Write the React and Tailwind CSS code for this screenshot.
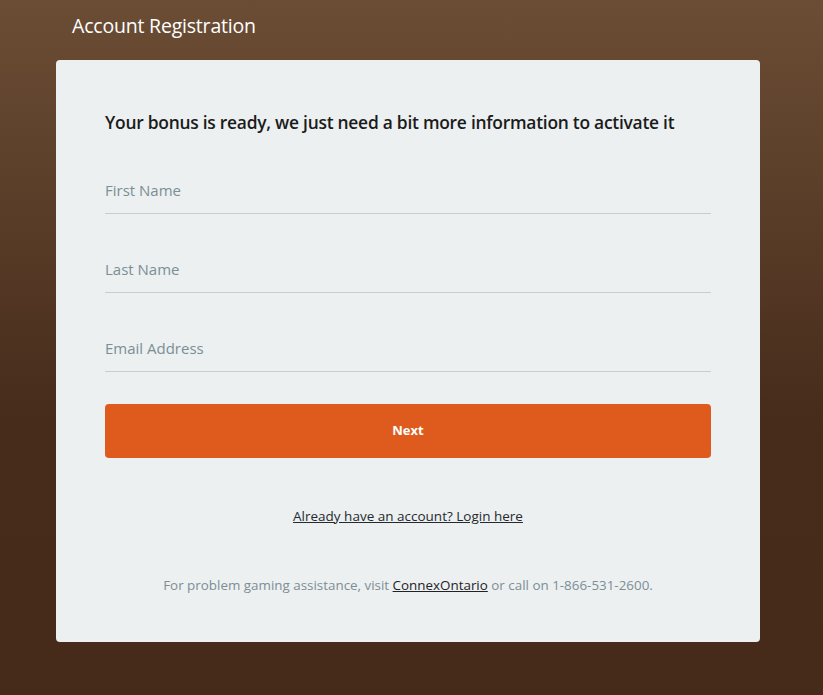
export default function App() {
  const font = { fontFamily: '"Open Sans", "Noto Sans", sans-serif' };
  return (
    <div
      className="min-h-[695px] w-full bg-[linear-gradient(to_bottom,#6b4d35_0%,#5a3d28_30%,#472c1c_60%,#462b1b_100%)] px-[56px] pb-[53px]"
      style={font}
    >
      <div className="flex h-[60px] items-center pb-[8px] pl-[16px]">
        <h1 className="text-[19.5px] tracking-[-0.2px] text-white">Account Registration</h1>
      </div>
      <div className="w-[704px] rounded-[4px] bg-[#ecf0f1] px-[49px] pb-[47px] pt-[49px]">
        <h2 className="text-[17.4px] font-semibold tracking-[-0.25px] text-[#1b1b1b] leading-[26px]">
          Your bonus is ready, we just need a bit more information to activate it
        </h2>
        <div className="mt-[26px] flex flex-col gap-[26px]">
          {["First Name", "Last Name", "Email Address"].map((p) => (
            <input
              key={p}
              placeholder={p}
              className="h-[53px] w-full border-b border-[#c7ced1] bg-transparent pt-[5px] text-[15px] text-[#333] outline-none placeholder:text-[#7b8e95]"
              style={font}
            />
          ))}
        </div>
        <button
          className="mt-[32px] flex h-[54px] w-full items-center justify-center rounded-[4px] bg-[#de5b1d] text-[13px] font-bold text-white"
          style={font}
        >
          Next
        </button>
        <div className="mt-[48px] text-center text-[13.5px] text-[#262a2e]">
          <a href="#" className="underline">Already have an account? Login here</a>
        </div>
        <p className="mt-[49px] text-center text-[13.4px] text-[#7d8e95]">
          For problem gaming assistance, visit{" "}
          <a href="#" className="text-[#1f2226] underline">ConnexOntario</a> or call on 1-866-531-2600.
        </p>
      </div>
    </div>
  );
}
